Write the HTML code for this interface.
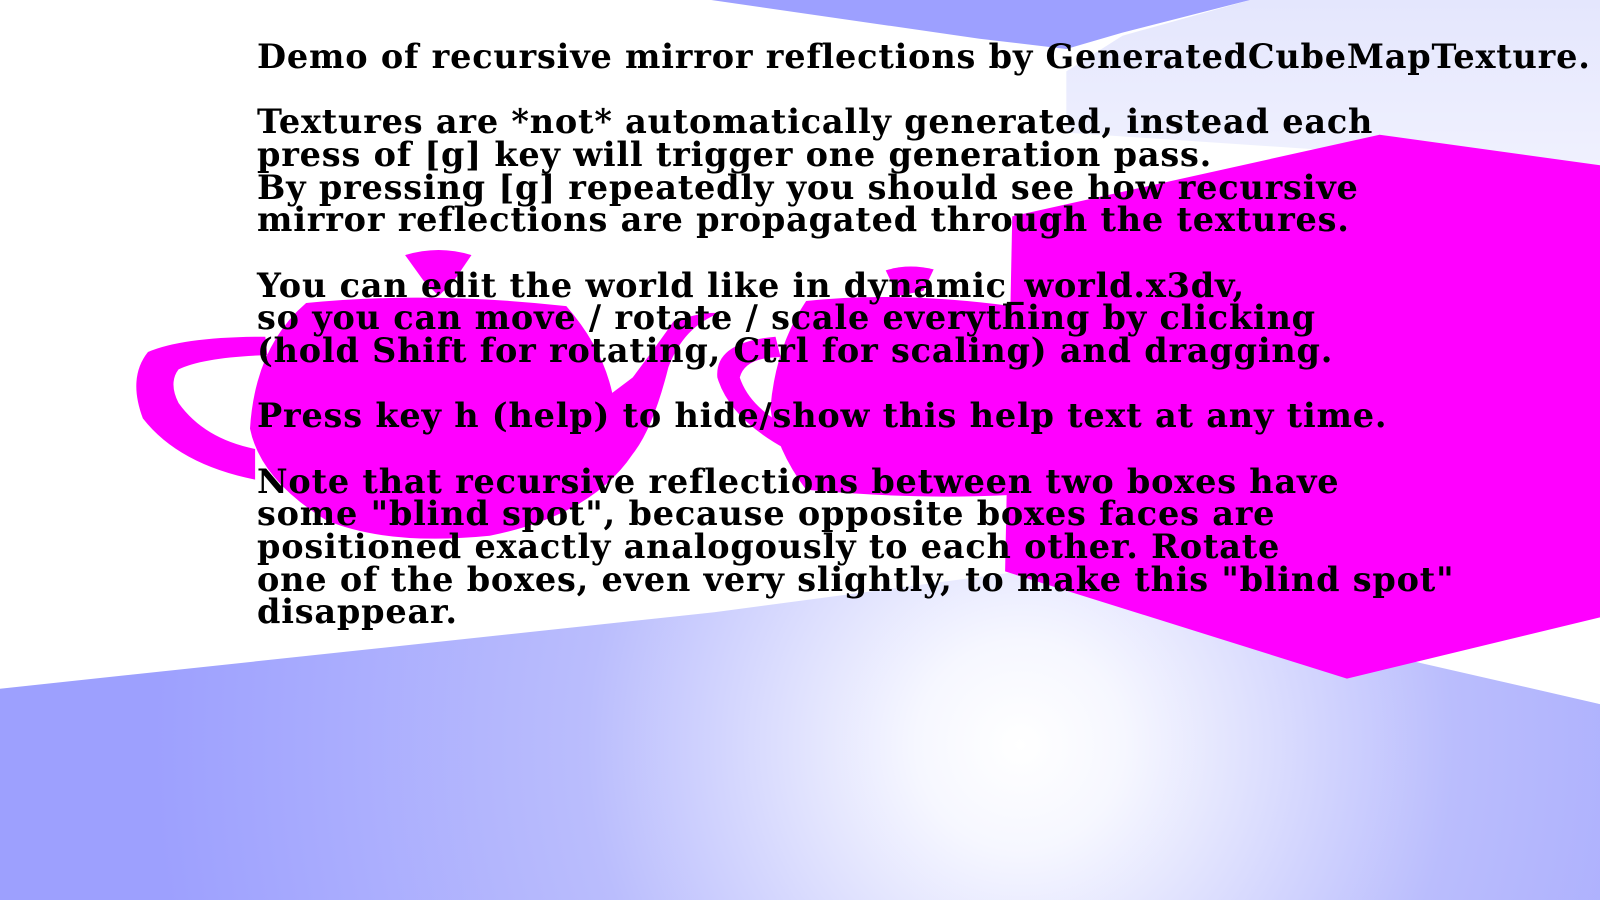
<!DOCTYPE html>
<html><head><meta charset="utf-8"><style>
html,body{margin:0;padding:0;width:1600px;height:900px;overflow:hidden;background:#fff}
svg{position:absolute;left:0;top:0}
.t{position:absolute;left:257px;top:41px;font-family:"DejaVu Serif","Liberation Serif",serif;font-weight:bold;font-size:33.5px;line-height:32.65px;color:#000;white-space:pre;letter-spacing:0.8px}
</style></head><body>
<svg width="1600" height="900" viewBox="0 0 1568 882" preserveAspectRatio="none">
<defs>
<radialGradient id="fl" cx="1000" cy="730" r="850" gradientUnits="userSpaceOnUse">
<stop offset="0" stop-color="#ffffff"/><stop offset="0.12" stop-color="#f6f7ff"/><stop offset="0.5" stop-color="#babdfd"/><stop offset="1" stop-color="#9da0fe"/></radialGradient>
<linearGradient id="lv" x1="0" y1="0" x2="0" y2="1"><stop offset="0" stop-color="#e4e6fd"/><stop offset="1" stop-color="#f0f1fe"/></linearGradient>
</defs>
<polygon points="1225,0 1568,0 1568,165 1045,130 1045,70 1100,35" fill="url(#lv)"/>
<polygon points="697,0 1225,0 1100,32 1045,48 960,38" fill="#9da0ff"/>
<polygon points="0,675 700,600 1000,560 1568,690 1568,882 0,882" fill="url(#fl)"/>
<polygon points="1420,640 1568,605 1568,690" fill="#fff"/>
<polygon points="992,212 1352,132 1568,162 1568,605 1320,665 985,560" fill="#ff00ff"/>
<g fill="#ff00ff">
<path d="M868,265 Q890,258 915,264 L905,285 L880,290 Z"/>
<path d="M790,295 Q880,285 992,300 L992,485 Q900,490 790,480 Q760,440 755,400 Q760,340 790,295 Z"/>
<path d="M760,330 Q700,335 703,370 Q715,410 770,440 L775,420 Q735,400 725,370 Q730,350 765,350 Z"/>
</g>
<g fill="#ff00ff">
<path d="M397,250 Q430,240 462,250 L445,275 L430,290 L415,275 Z"/>
<path d="M300,297 Q420,285 555,300 Q590,340 600,385 L620,370 Q650,330 660,315 Q690,305 705,307 Q670,320 655,360 Q640,420 620,445 Q580,505 480,525 Q380,535 320,510 Q255,470 245,420 Q250,340 300,297 Z"/>
<path d="M260,330 Q180,330 145,345 Q125,370 140,410 Q175,455 250,470 L250,440 Q200,430 175,395 Q165,375 175,362 Q200,350 262,348 Z"/>
</g>
</svg>
<div class="t">Demo of recursive mirror reflections by GeneratedCubeMapTexture.

Textures are *not* automatically generated, instead each
press of [g] key will trigger one generation pass.
By pressing [g] repeatedly you should see how recursive
mirror reflections are propagated through the textures.

You can edit the world like in dynamic_world.x3dv,
so you can move / rotate / scale everything by clicking
(hold Shift for rotating, Ctrl for scaling) and dragging.

Press key h (help) to hide/show this help text at any time.

Note that recursive reflections between two boxes have
some "blind spot", because opposite boxes faces are
positioned exactly analogously to each other. Rotate
one of the boxes, even very slightly, to make this "blind spot"
disappear.</div>
</body></html>
